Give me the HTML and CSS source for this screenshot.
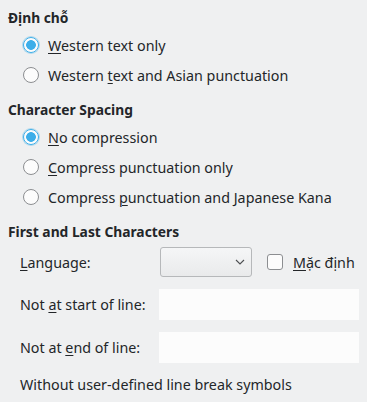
FILE: index.html
```html
<!DOCTYPE html>
<html lang="vi">
<head>
    <meta charset="UTF-8">
    <title>Asian Typography</title>
    <link rel="stylesheet" href="styles.css">
</head>
<body>
    <div class="page">
        <div class="group-title">Định chỗ</div>
        <div class="options">
            <label class="radio-row"><span class="radio checked"></span><span><u>W</u>estern text only</span></label>
            <label class="radio-row"><span class="radio"></span><span>Western <u>t</u>ext and Asian punctuation</span></label>
        </div>

        <div class="group-title">Character Spacing</div>
        <div class="options">
            <label class="radio-row"><span class="radio checked"></span><span><u>N</u>o compression</span></label>
            <label class="radio-row"><span class="radio"></span><span><u>C</u>ompress punctuation only</span></label>
            <label class="radio-row"><span class="radio"></span><span>Compress <u>p</u>unctuation and Japanese Kana</span></label>
        </div>

        <div class="group-title">First and Last Characters</div>
        <div class="form">
            <div class="form-row lang-row">
                <span class="label"><u>L</u>anguage:</span>
                <div class="lang-controls">
                    <div class="select">
                        <svg width="10" height="6" viewBox="0 0 10 6"><path d="M1 1 L5 5 L9 1" fill="none" stroke="#4d4f52" stroke-width="1.1"/></svg>
                    </div>
                    <label class="check-row"><span class="checkbox"></span><span><u>M</u>ặc định</span></label>
                </div>
            </div>
            <div class="form-row">
                <span class="label">Not <u>a</u>t start of line:</span>
                <div class="text-input"></div>
            </div>
            <div class="form-row">
                <span class="label">Not at <u>e</u>nd of line:</span>
                <div class="text-input"></div>
            </div>
            <div class="note">Without user-defined line break symbols</div>
        </div>
    </div>
</body>
</html>
```

FILE: styles.css
```css
body {
    margin: 0;
    background-color: #eff0f1;
    color: #232629;
    font-family: 'Noto Sans', sans-serif;
    font-size: 14.3px;
}
.page {
    padding: 8px;
}
.group-title {
    font-weight: bold;
    font-size: 13.8px;
    height: 20px;
    line-height: 20px;
}
.options {
    margin: 2px 0 10px 0;
    padding-left: 15px;
}
.options:last-of-type {
    margin-bottom: 7px;
}
.radio-row {
    display: flex;
    align-items: center;
    height: 30px;
    gap: 9px;
}
.radio {
    width: 14px;
    height: 14px;
    border: 1px solid #8c8e91;
    border-radius: 50%;
    background-color: #fcfcfc;
    box-sizing: content-box;
}
.radio.checked {
    border-color: #3daee9;
    background: radial-gradient(circle, #3daee9 0, #3daee9 4.5px, #fcfcfc 5.2px);
    box-shadow: 0 0 0 1px rgba(61, 174, 233, 0.35);
}
u {
    text-decoration-thickness: 1px;
    text-underline-offset: 2px;
}
.form {
    padding-left: 12px;
    margin-top: 5px;
}
.form-row {
    display: flex;
    align-items: center;
}
.label {
    width: 139px;
}
.lang-row {
    height: 30px;
    margin-bottom: 12px;
}
.lang-controls {
    display: flex;
    align-items: center;
    gap: 15px;
    padding-left: 1px;
}
.select {
    width: 84px;
    height: 28px;
    border: 1px solid #b6b8ba;
    border-radius: 3px;
    background: linear-gradient(#f5f6f7, #e9eaeb);
    display: flex;
    align-items: center;
    justify-content: flex-end;
    padding-right: 6px;
    box-sizing: content-box;
}
.check-row {
    display: flex;
    align-items: center;
    gap: 10px;
}
.checkbox {
    width: 14px;
    height: 14px;
    border: 1px solid #8c8e91;
    border-radius: 3px;
    background-color: #fcfcfc;
}
.text-input {
    width: 200px;
    height: 31px;
    background-color: #fcfcfc;
}
.form-row + .form-row {
    margin-bottom: 12px;
}
.note {
    height: 20px;
    line-height: 20px;
    margin-top: 0;
}
```
